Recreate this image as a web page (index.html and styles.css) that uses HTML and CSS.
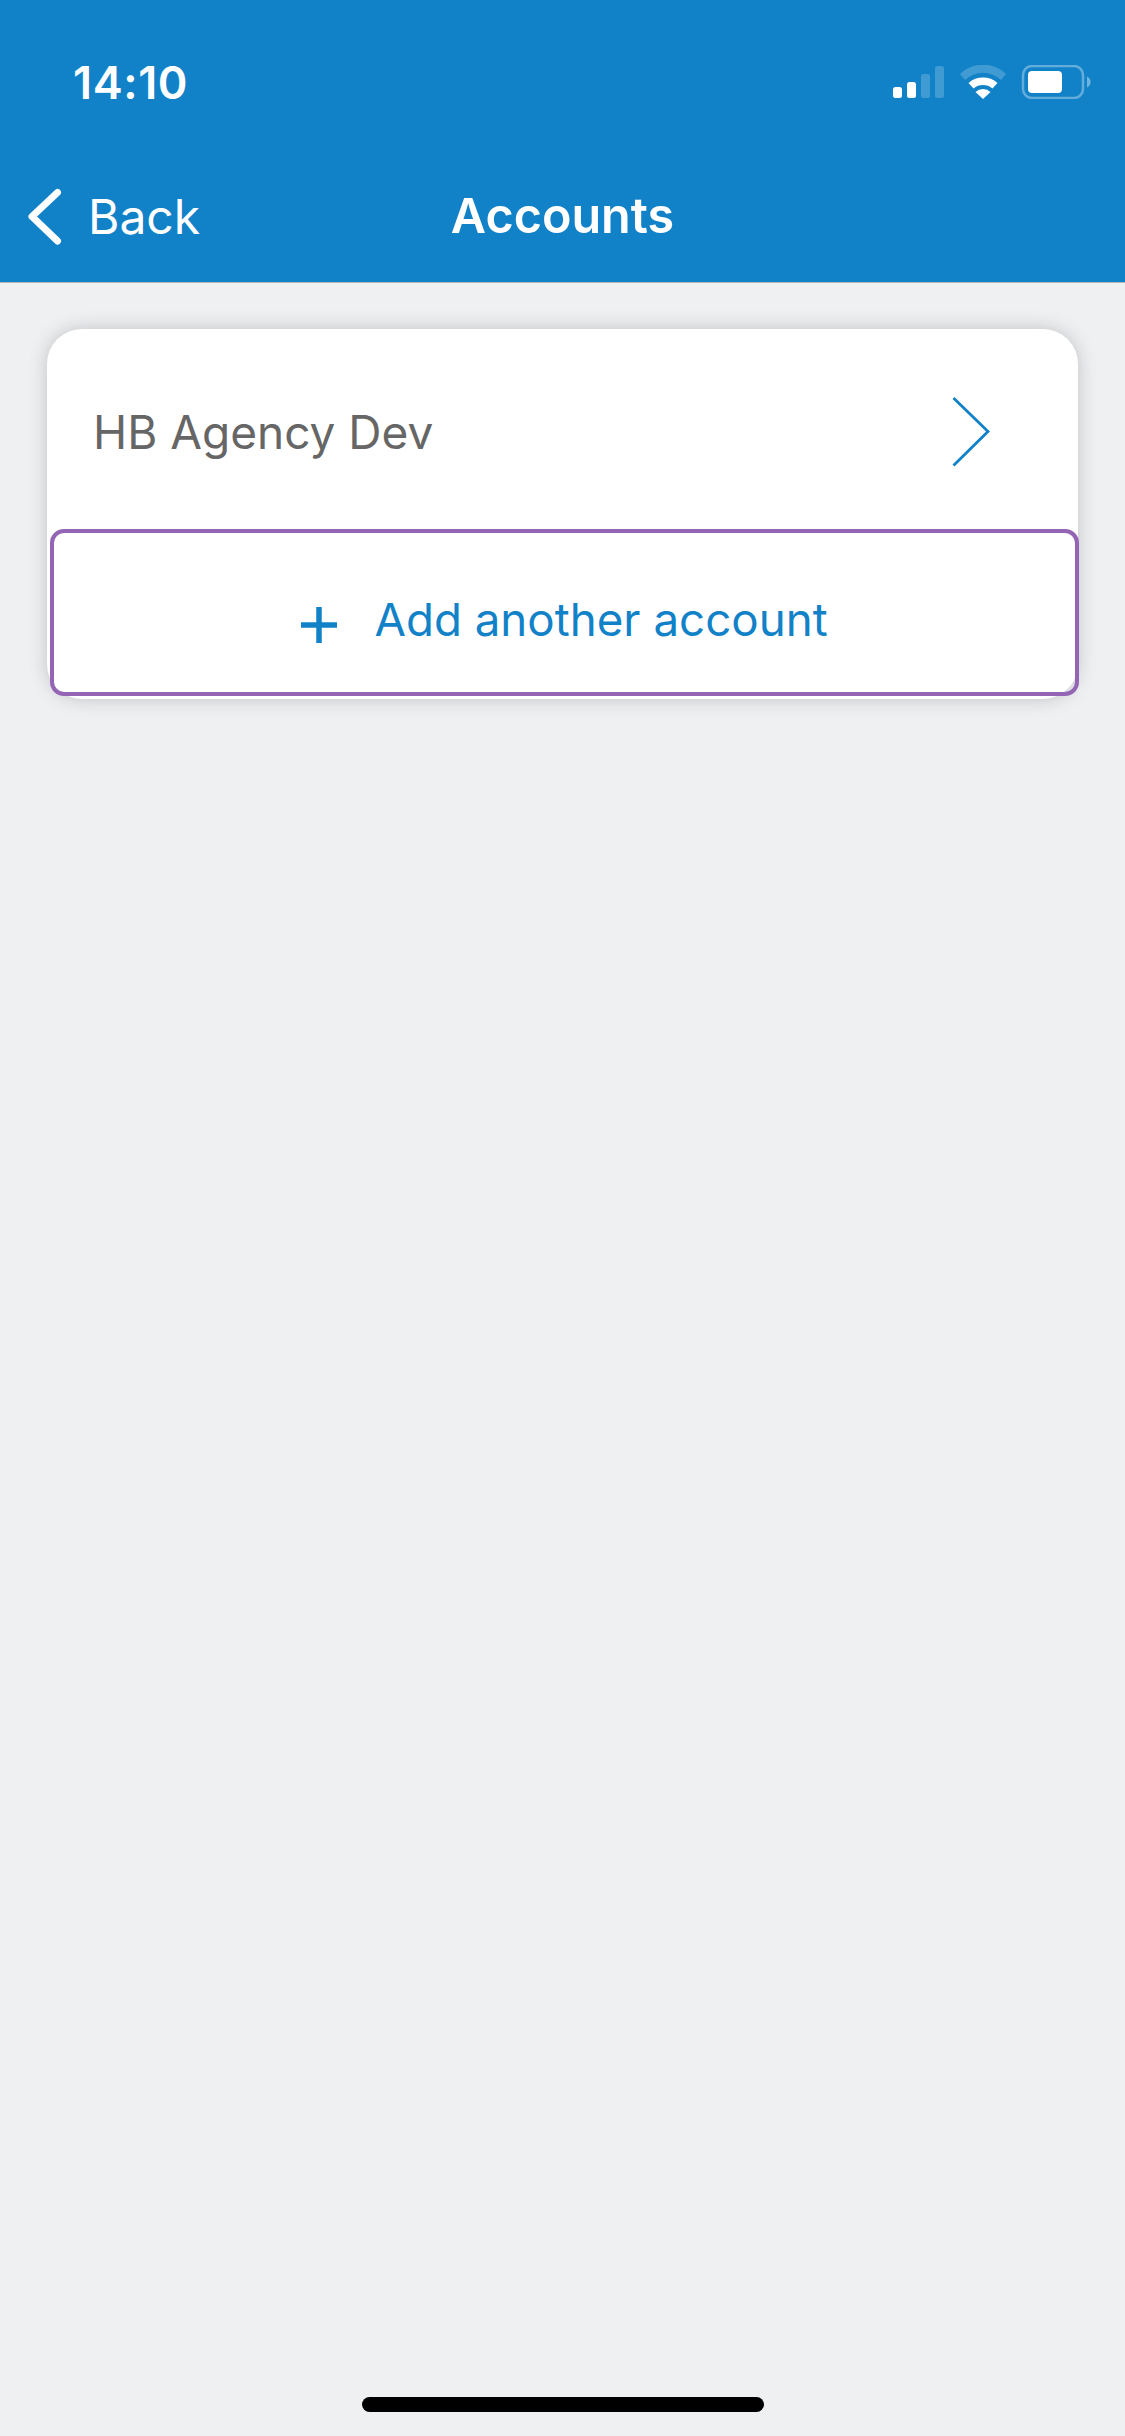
FILE: index.html
```html
<!DOCTYPE html>
<html lang="en">
<head>
<meta charset="utf-8">
<title>Accounts</title>
<link rel="stylesheet" href="styles.css">
</head>
<body>
<div class="screen">
  <header class="header">
    <div class="status">
      <span class="time">14:10</span>
      <svg class="status-icons" width="198" height="34" viewBox="893 65 198 34">
        <rect x="893" y="87" width="9" height="11" rx="2.5" fill="#fff"/>
        <rect x="907" y="82" width="9" height="16" rx="2.5" fill="#fff"/>
        <rect x="921" y="74" width="9" height="24" rx="2.5" fill="#fff" opacity=".2"/>
        <rect x="935" y="66" width="9" height="32" rx="2.5" fill="#fff" opacity=".2"/>
        <path d="M960 74 A33 33 0 0 1 1006 74 L1001 80 A26 26 0 0 0 965 80 Z" fill="#fff" opacity=".2"/>
        <path d="M968.5 83 A22 22 0 0 1 997.5 83 L992.5 88.5 A15 15 0 0 0 973.5 88.5 Z" fill="#fff"/>
        <path d="M975.5 92 A11 11 0 0 1 990.5 92 L983 99 Z" fill="#fff"/>
        <rect x="1023" y="66" width="60" height="32" rx="9" fill="none" stroke="#fff" stroke-width="2.5" opacity=".35"/>
        <rect x="1028" y="71" width="34" height="22" rx="4" fill="#fff"/>
        <path d="M1087 76.5 A6 6 0 0 1 1087 87.5 Z" fill="#fff" opacity=".4"/>
      </svg>
    </div>
    <nav class="nav">
      <div class="back">
        <svg class="back-icon" width="36" height="58" viewBox="26 186 36 58">
          <path d="M57.5 191.5 L32 215.5 L57.5 240" fill="none" stroke="#fff" stroke-width="7" stroke-linecap="round" stroke-linejoin="round"/>
        </svg>
        <span class="back-label">Back</span>
      </div>
      <h1 class="title">Accounts</h1>
    </nav>
  </header>
  <main class="content">
    <section class="card">
      <div class="account-row">
        <span class="account-name">HB Agency Dev</span>
        <svg class="row-chevron" width="38" height="70" viewBox="952 397 38 70">
          <path d="M953.5 398 L988 431.5 L953.5 465.5" fill="none" stroke="#1282c8" stroke-width="2.8" stroke-miterlimit="10"/>
        </svg>
      </div>
      <button class="add-button" type="button">
        <svg class="plus" width="36" height="36" viewBox="0 0 36 36">
          <path d="M18 0 V36 M0 18 H36" fill="none" stroke="#1282c8" stroke-width="5.5"/>
        </svg>
        <span class="add-label">Add another account</span>
      </button>
    </section>
  </main>
  <div class="home-area">
    <div class="home-bar"></div>
  </div>
</div>
</body>
</html>
```

FILE: styles.css
```css
* { box-sizing: border-box; }
html, body { margin: 0; padding: 0; }
body {
  background: #eff0f2;
  font-family: Inter, "Liberation Sans", sans-serif;
}
.screen {
  width: 1125px;
  height: 2436px;
  display: flex;
  flex-direction: column;
  overflow: hidden;
}
.header {
  height: 283px;
  background: #1282c8;
  border-bottom: 1px solid #b4b6b8;
  color: #fff;
  flex: none;
}
.status {
  height: 150px;
  padding: 66px 34px 0 73px;
  display: flex;
  justify-content: space-between;
  align-items: flex-start;
}
.time {
  font-size: 45px;
  font-weight: 600;
  line-height: 34px;
  letter-spacing: .6px;
}
.status-icons { display: block; margin-top: -1px; }
.nav {
  height: 132px;
  display: flex;
  align-items: flex-start;
  position: relative;
  padding: 36px 0 0 26px;
}
.back {
  display: flex;
  align-items: center;
  gap: 26px;
}
.back-icon { display: block; }
.back-label {
  font-size: 48px;
  font-weight: 400;
  line-height: 58px;
  margin-top: 2px;
}
.title {
  position: absolute;
  left: 0;
  right: 0;
  top: 37px;
  margin: 0;
  text-align: center;
  font-size: 48.5px;
  font-weight: 600;
  line-height: 58px;
}
.content {
  flex: 1;
  padding: 46px 47px 0;
}
.card {
  background: #fff;
  border-radius: 35px;
  height: 370px;
  padding: 0 0 3px 3px;
  box-shadow: 0 0 18px rgba(90, 95, 100, .32);
  display: flex;
  flex-direction: column;
}
.account-row {
  height: 200px;
  flex: none;
  display: flex;
  align-items: center;
  justify-content: space-between;
  padding: 0 88px 0 43px;
}
.account-name {
  font-size: 46px;
  color: #666;
  line-height: 60px;
  margin-top: 6px;
}
.row-chevron { display: block; margin-top: 5px; }
.add-button {
  flex: none;
  height: 167px;
  margin-right: -1px;
  background: transparent;
  border: 4px solid #9565b5;
  border-radius: 14px;
  padding: 0;
  display: flex;
  align-items: center;
  justify-content: center;
  gap: 37px;
  font-family: inherit;
  color: #1282c8;
}
.plus { display: block; margin-top: 24px; }
.add-label {
  font-size: 45.7px;
  line-height: 60px;
  margin-top: 14px;
}
.home-area {
  height: 39px;
  flex: none;
  display: flex;
  justify-content: center;
  align-items: flex-start;
}
.home-bar {
  width: 402px;
  height: 15px;
  background: #000;
  border-radius: 8px;
}
```
